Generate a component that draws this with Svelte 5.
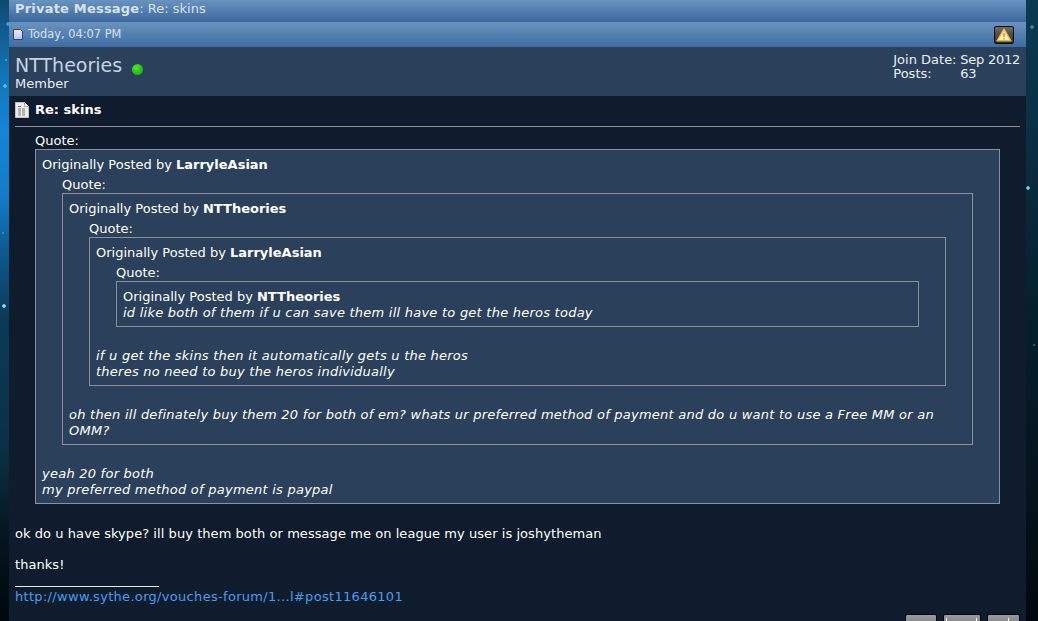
<script lang="ts">
	// Private message view: header bars, sender profile, nested quotes, signature.
	const tools = [
		{ label: 'Edit', width: 32, ticks: [] },
		{ label: 'Quote', width: 38, ticks: [2, 32] },
		{ label: 'Reply', width: 33, ticks: [20] }
	];
</script>

{#snippet quote(author, body)}
	<div class="Quote">
		<div class="Quote__label">Quote:</div>
		<div class="Quote__box">
			<div class="Quote__by">Originally Posted by <b>{author}</b></div>
			{@render body()}
		</div>
	</div>
{/snippet}

{#snippet level4()}
	<div class="Quote__text"><i>id like both of them if u can save them ill have to get the heros today</i></div>
{/snippet}

{#snippet level3()}
	{@render quote('NTTheories', level4)}
	<div class="Quote__text Quote__text--after">
		<i>if u get the skins then it automatically gets u the heros<br />theres no need to buy the heros individually</i>
	</div>
{/snippet}

{#snippet level2()}
	{@render quote('LarryleAsian', level3)}
	<div class="Quote__text Quote__text--after">
		<i>oh then ill definately buy them 20 for both of em? whats ur preferred method of payment and do u want to use a Free MM or an OMM?</i>
	</div>
{/snippet}

{#snippet level1()}
	{@render quote('NTTheories', level2)}
	<div class="Quote__text Quote__text--after">
		<i>yeah 20 for both<br />my preferred method of payment is paypal</i>
	</div>
{/snippet}

<div class="Page">
	<main class="Panel">
		<header class="Title"><b>Private Message</b>: Re: skins</header>

		<div class="Meta">
			<div class="Meta__date">
				<svg width="10" height="11" viewBox="0 0 10 11" aria-hidden="true">
					<defs>
						<linearGradient id="metaDoc" x1="0" y1="0" x2="0" y2="1">
							<stop offset="0" stop-color="#eef0fb" />
							<stop offset="1" stop-color="#bcc2e6" />
						</linearGradient>
					</defs>
					<path d="M0.5 0.5H7.5L9.5 2.5V10.5H0.5Z" fill="url(#metaDoc)" stroke="#33437e" />
				</svg>
				Today, 04:07 PM
			</div>
			<button class="Report" aria-label="Report">
				<svg width="16" height="14" viewBox="0 0 16 14" aria-hidden="true">
					<path d="M8 1.2L15 12.8H1Z" fill="#fff0b4" stroke="#f2b440" stroke-width="1.4" stroke-linejoin="round" />
					<path d="M8 5V9M8 10.2V11.6" stroke="#b88a2c" stroke-width="1.4" />
				</svg>
			</button>
		</div>

		<section class="Profile">
			<div>
				<div class="Profile__name">NTTheories<span class="Profile__dot"></span></div>
				<div class="Profile__rank">Member</div>
			</div>
			<dl class="Profile__stats">
				<dt>Join Date:</dt><dd>Sep 2012</dd>
				<dt>Posts:</dt><dd>63</dd>
			</dl>
		</section>

		<article class="Post">
			<h2 class="Post__title">
				<svg width="14" height="16" viewBox="0 0 14 16" aria-hidden="true">
					<path d="M0.5 0.5H9.5L13.5 4.5V15.5H0.5Z" fill="#ececec" stroke="#c4c4c4" />
					<path d="M9.5 0.5V4.5H13.5" fill="#fff" stroke="#aaa" />
					<path d="M3 4.5H7M3 7H11M3 9H11M3 11H11M3 13H11" stroke="#7c7c7c" stroke-dasharray="3 1" />
				</svg>
				Re: skins
			</h2>
			<hr class="Post__rule" />

			<div class="Post__body">
				{@render quote('LarryleAsian', level1)}
				<p class="Post__line">ok do u have skype? ill buy them both or message me on league my user is joshytheman</p>
				<p class="Post__line">thanks!</p>
			</div>

			<div class="Sig">
				<div class="Sig__rule"></div>
				<a class="Sig__link" href="#post">http://www.sythe.org/vouches-forum/1...l#post11646101</a>
			</div>

			<div class="Tools">
				{#each tools as t (t.label)}
					<span class="Tools__btn" style="width: {t.width}px;" aria-label={t.label}>
						{#each t.ticks as left}
							<span class="Tools__tick" style="left: {left}px;"></span>
						{/each}
					</span>
				{/each}
			</div>
		</article>
	</main>
</div>

<style>
	:global(body) {
		margin: 0;
		background: #04101c;
	}

	.Page {
		height: 621px;
		overflow: hidden;
		padding: 0 12px 0 9px;
		box-sizing: border-box;
		font-family: 'DejaVu Sans', Verdana, sans-serif;
		font-size: 13px;
		line-height: 16px;
		color: #fff;
		background:
			radial-gradient(circle at 1028px 188px, #7fc4e6 0, #7fc4e6 1.5px, transparent 2px),
			radial-gradient(circle at 1032px 27px, #3d7fa5 0, #3d7fa5 1.5px, transparent 2px),
			radial-gradient(circle at 1034px 345px, #2f5a70 0, #2f5a70 1px, transparent 1.5px),
			radial-gradient(circle at 4px 306px, #8fd4f0 0, #8fd4f0 1.5px, transparent 2px),
			radial-gradient(circle at 5px 86px, #4fb8ee 0, #4fb8ee 1.5px, transparent 2px),
			radial-gradient(circle at 8px 24px, #3d9ed8 0, #3d9ed8 1.5px, transparent 2px),
			radial-gradient(circle at 6px 60px, #3d9ed8 0, #3d9ed8 1px, transparent 1.5px),
			radial-gradient(circle at 3px 233px, #3a86b8 0, #3a86b8 1px, transparent 1.5px),
			linear-gradient(180deg, #0e4a72 0, #1272b4 70px, #1484d6 130px, #137ac8 200px, #0e5a90 250px, #0a3a58 320px, #0a3044 450px, #04141e 540px, #01070c 621px) 0 0 / 9px 100% no-repeat,
			linear-gradient(180deg, #0c3a52 0, #0a3044 120px, #06202e 300px, #05141e 480px, #01080d 621px);
	}

	.Panel {
		height: 100%;
		background: #0f1c2d;
	}

	.Title {
		height: 22px;
		padding: 0 6px;
		line-height: 17px;
		color: #d8e2f4;
		background: linear-gradient(180deg, #6a93bf 0, #3b679c 100%);
	}

	.Title b {
		letter-spacing: 0.2px;
	}

	.Meta {
		display: flex;
		justify-content: space-between;
		align-items: center;
		height: 25px;
		padding: 0 12px 0 4px;
		font-size: 11.4px;
		color: #d8e2f4;
		background: linear-gradient(180deg, #6a93bf 0, #3e6da3 100%);
	}

	.Meta__date {
		display: flex;
		align-items: center;
		gap: 5px;
		line-height: 14px;
		padding-bottom: 1px;
	}

	.Report {
		display: flex;
		align-items: center;
		justify-content: center;
		width: 20px;
		height: 18px;
		padding: 0;
		border: 1px solid #0c0c0c;
		border-radius: 2px;
		background: linear-gradient(180deg, #6c6c6c, #2c2c2c);
	}

	.Profile {
		display: flex;
		justify-content: space-between;
		height: 49px;
		padding: 6px 6px 0 6px;
		box-sizing: border-box;
		background: #2b405a;
	}

	.Profile__name {
		font-size: 19px;
		line-height: 24px;
		color: #c4d2e4;
	}

	.Profile__dot {
		display: inline-block;
		width: 11px;
		height: 11px;
		margin-left: 10px;
		border-radius: 50%;
		vertical-align: -3px;
		background: radial-gradient(circle at 40% 35%, #4fe82a, #129a06);
	}

	.Profile__rank {
		line-height: 14px;
		color: #e8eef6;
	}

	.Profile__stats {
		display: grid;
		grid-template-columns: 67px auto;
		align-content: start;
		margin: 0;
		line-height: 14px;
		color: #e8f0fa;
	}

	.Profile__stats dt,
	.Profile__stats dd {
		margin: 0;
	}

	.Profile__stats dd {
		letter-spacing: -0.25px;
	}

	.Post {
		padding: 6px 6px 0;
	}

	.Post__title {
		display: flex;
		align-items: center;
		gap: 6px;
		margin: 0;
		font-size: 13px;
		line-height: 16px;
		font-weight: bold;
	}

	.Post__rule {
		height: 1px;
		margin: 8px 0 6px;
		border: 0;
		background: #8d8f92;
	}

	.Quote {
		margin: 0 20px;
	}

	.Quote__label {
		line-height: 16px;
	}

	.Quote__box {
		padding: 7px 6px 5px;
		border: 1px solid #8d9097;
		background: #2b405a;
	}

	.Quote__by {
		line-height: 16px;
	}

	.Quote__by + .Quote {
		margin-top: 4px;
	}

	.Quote__text {
		line-height: 16px;
		letter-spacing: 0.24px;
	}

	.Quote__text--after {
		margin-top: 21px;
	}

	.Post__line {
		margin: 22px 0 0;
		letter-spacing: 0.06px;
	}

	.Post__line + .Post__line {
		margin-top: 15px;
	}

	.Sig {
		margin-top: 13px;
	}

	.Sig__rule {
		width: 144px;
		height: 1px;
		margin-bottom: 2px;
		background: #e8e8e8;
	}

	.Sig__link {
		color: #4a9cf0;
		text-decoration: none;
		letter-spacing: 0.31px;
	}

	.Tools {
		display: flex;
		justify-content: flex-end;
		gap: 6px;
		margin-top: 9px;
	}

	.Tools__btn {
		position: relative;
		height: 20px;
		box-sizing: border-box;
		border: 1px solid #05090f;
		border-radius: 2px;
		background: linear-gradient(180deg, #9a9a9a, #6e6e6e);
	}

	.Tools__tick {
		position: absolute;
		top: 3px;
		width: 1px;
		height: 4px;
		background: #fff;
	}
</style>
